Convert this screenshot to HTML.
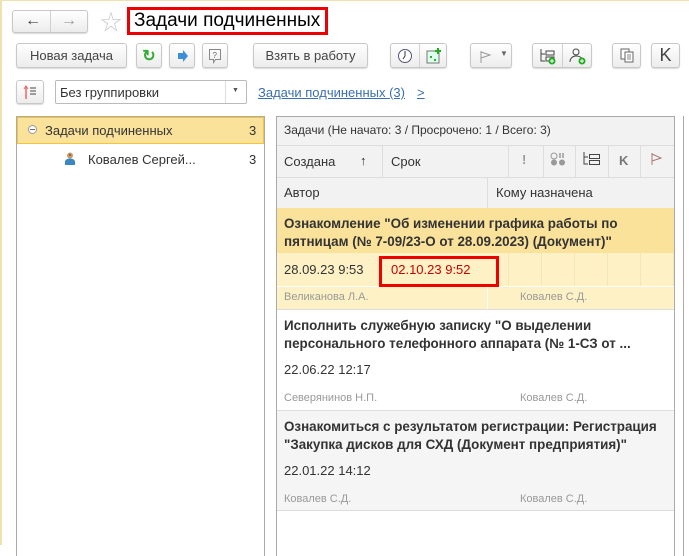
<!DOCTYPE html>
<html><head><meta charset="utf-8"><style>
*{box-sizing:border-box;margin:0;padding:0}
body{width:689px;height:545px;overflow:hidden;background:#fff;font-family:"Liberation Sans","Noto Sans CJK SC",sans-serif;font-size:13px;color:#333;position:relative}
.a{position:absolute}
.btn{position:absolute;border:1px solid #c8c8c8;border-radius:3px;background:linear-gradient(#fff,#ececec);box-shadow:0 1px 1px rgba(0,0,0,.15);display:flex;align-items:center;justify-content:center;color:#444;font-size:13px}
.sep{position:absolute;top:0;bottom:0;width:1px;background:#d0d0d0}
.t{position:absolute;white-space:nowrap}
.b{font-weight:bold;color:#333;font-size:13.4px}
.g{color:#999;font-size:11px}
</style></head><body>
<div class="a" style="left:0;top:0;width:2px;height:545px;background:#efe2b0"></div>
<div class="a" style="left:0;top:0;width:689px;height:1px;background:#efe2b0"></div>

<div class="btn" style="left:12px;top:10px;width:76px;height:23px"><span style="font-size:16px;color:#444;position:absolute;left:12px;top:1px">&#8592;</span><div class="sep" style="left:37px"></div><span style="font-size:16px;color:#999;position:absolute;left:48px;top:1px">&#8594;</span></div>
<div class="t" style="left:100px;top:5px;font-size:22px;color:#ccc">☆</div>
<div class="a" style="left:127px;top:7px;width:201px;height:28px;border:3px solid #e00"></div>
<div class="t" style="left:134px;top:10px;font-size:19px;color:#000">Задачи подчиненных</div>

<div class="btn" style="left:16px;top:43px;width:111px;height:25px">Новая задача</div>
<div class="btn" style="left:136px;top:43px;width:26px;height:25px;color:#3a3;font-size:16px;font-weight:bold">↻</div>
<div class="btn" style="left:169px;top:43px;width:26px;height:25px"><svg width="14" height="14"><path d="M3 4h5V1l5 6-5 6V10H3z" fill="#3a8fd8"/></svg></div>
<div class="btn" style="left:202px;top:43px;width:26px;height:25px"><svg width="14" height="16"><path d="M1.5 1.5h11v10h-5l-2 3v-3h-4z" fill="none" stroke="#888"/><text x="4.5" y="10" font-size="8" fill="#666" font-family="Liberation Sans">?</text></svg></div>
<div class="btn" style="left:253px;top:43px;width:115px;height:25px">Взять в работу</div>
<div class="btn" style="left:390px;top:43px;width:57px;height:25px"><svg style="position:absolute;left:6px;top:4px" width="16" height="16"><circle cx="8" cy="8" r="6.5" fill="#fff" stroke="#557"/><path d="M8 3v5l-2 3" stroke="#335" fill="none"/></svg><div class="sep" style="left:28px"></div><svg style="position:absolute;left:35px;top:4px" width="16" height="16"><rect x="1" y="3" width="12" height="12" fill="#dfe" stroke="#777"/><path d="M4 8h2v2H4zM8 11h2v2H8z" fill="#3a3"/><path d="M12 0v6M9 3h6" stroke="#2a2" stroke-width="2"/></svg></div>
<div class="btn" style="left:470px;top:43px;width:42px;height:25px"><svg style="position:absolute;left:8px;top:6px" width="14" height="14"><path d="M2 1v12M2 2l9 3-9 3" fill="none" stroke="#999"/></svg><span style="position:absolute;left:29px;top:5px;font-size:8px;color:#666">▼</span></div>
<div class="btn" style="left:532px;top:43px;width:60px;height:25px"><svg style="position:absolute;left:6px;top:4px" width="18" height="17"><path d="M2 1v12h4M2 6h4" stroke="#444" fill="none"/><rect x="7" y="3" width="8" height="4" fill="none" stroke="#444"/><rect x="7" y="9" width="8" height="4" fill="none" stroke="#444"/><circle cx="13" cy="13" r="3.5" fill="#2a2"/><path d="M11 13h4M13 11v4" stroke="#fff"/></svg><div class="sep" style="left:29px"></div><svg style="position:absolute;left:36px;top:4px" width="18" height="17"><circle cx="7" cy="4" r="3" fill="none" stroke="#444"/><path d="M1 14c0-4 3-6 6-6s5 1 6 3" fill="none" stroke="#444"/><circle cx="13" cy="13" r="3.5" fill="#2a2"/><path d="M11 13h4M13 11v4" stroke="#fff"/></svg></div>
<div class="btn" style="left:612px;top:43px;width:29px;height:25px"><svg width="14" height="15"><rect x="1" y="1" width="8" height="10" fill="#fff" stroke="#666"/><rect x="5" y="4" width="8" height="10" fill="#fff" stroke="#666"/><path d="M7 7h4M7 9h4M7 11h4" stroke="#888"/></svg></div>
<div class="btn" style="left:651px;top:43px;width:29px;height:25px;font-size:18px;color:#444">K</div>

<div class="btn" style="left:16px;top:80px;width:28px;height:24px"><svg width="16" height="16"><path d="M4 2v13" stroke="#e66" stroke-width="1.5"/><path d="M2 5l2-3 2 3" fill="none" stroke="#e66"/><path d="M8 4h6M8 7h6M8 10h6" stroke="#444"/></svg></div>
<div class="a" style="left:55px;top:80px;width:192px;height:24px;border:1px solid #bbb;border-radius:2px;background:#fff"></div>
<div class="t" style="left:60px;top:85px">Без группировки</div>
<div class="a" style="left:225px;top:81px;width:1px;height:22px;background:#ddd"></div>
<div class="t" style="left:232px;top:87px;font-size:7px;color:#555">▼</div>
<div class="t" style="left:258px;top:85px;color:#3a6fb0;text-decoration:underline">Задачи подчиненных (3)</div>
<div class="t" style="left:417px;top:85px;color:#3a6fb0;text-decoration:underline">&gt;</div>

<div class="a" style="left:16px;top:116px;width:249px;height:440px;border:1px solid #aaa;border-bottom:none"></div>
<div class="a" style="left:17px;top:117px;width:247px;height:27px;background:#fbe29a;border:1px solid #f3c53d"></div>
<div class="a" style="left:28px;top:125px;width:9px;height:9px;border:1px solid #999;border-radius:50%;background:#fff"></div>
<div class="a" style="left:30px;top:129px;width:5px;height:1px;background:#666"></div>
<div class="t" style="left:45px;top:123px">Задачи подчиненных</div>
<div class="t" style="left:249px;top:123px">3</div>
<svg class="a" style="left:64px;top:152px" width="12" height="13"><circle cx="6" cy="3.5" r="3" fill="#c96"/><path d="M1 13v-3c0-2 2-3.5 5-3.5s5 1.5 5 3.5v3z" fill="#3a86c0"/><path d="M5 3h2" stroke="#333"/></svg>
<div class="t" style="left:88px;top:152px">Ковалев Сергей...</div>
<div class="t" style="left:249px;top:152px">3</div>

<div class="a" style="left:276px;top:116px;width:399px;height:440px;border:1px solid #aaa;border-bottom:none"></div>
<div class="a" style="left:683px;top:116px;width:6px;height:440px;border-left:1px solid #aaa"></div>
<div class="a" style="left:277px;top:117px;width:397px;height:60px;background:#f2f2f2"></div>
<div class="t" style="left:284px;top:123px;font-size:12px">Задачи (Не начато: 3 / Просрочено: 1 / Всего: 3)</div>
<div class="a" style="left:277px;top:145px;width:397px;height:1px;background:#ddd"></div>
<div class="a" style="left:277px;top:177px;width:397px;height:31px;background:#f2f2f2;border-top:1px solid #ddd"></div>
<div class="a" style="left:382px;top:146px;width:1px;height:31px;background:#ddd"></div>
<div class="a" style="left:508px;top:146px;width:1px;height:31px;background:#ddd"></div>
<div class="a" style="left:543px;top:146px;width:1px;height:31px;background:#ddd"></div>
<div class="a" style="left:575px;top:146px;width:1px;height:31px;background:#ddd"></div>
<div class="a" style="left:608px;top:146px;width:1px;height:31px;background:#ddd"></div>
<div class="a" style="left:640px;top:146px;width:1px;height:31px;background:#ddd"></div>
<div class="a" style="left:487px;top:177px;width:1px;height:31px;background:#ddd"></div>
<div class="t" style="left:284px;top:154px">Создана</div>
<div class="t" style="left:360px;top:153px">↑</div>
<div class="t" style="left:391px;top:154px">Срок</div>
<div class="t" style="left:522px;top:152px;color:#999;font-weight:bold">!</div>
<svg class="a" style="left:550px;top:152px" width="18" height="14"><circle cx="4" cy="4" r="3" fill="none" stroke="#999"/><path d="M10 1v5M13 1v5" stroke="#999" stroke-width="1.5"/><circle cx="4" cy="10.5" r="3" fill="#999"/><circle cx="12" cy="10.5" r="3" fill="#999"/></svg>
<svg class="a" style="left:583px;top:152px" width="18" height="14"><path d="M1 0v12h4M1 5h4" stroke="#444" fill="none"/><rect x="6.5" y="2.5" width="10" height="4" fill="none" stroke="#444"/><rect x="6.5" y="8.5" width="10" height="4" fill="none" stroke="#444"/></svg>
<div class="t" style="left:619px;top:153px;color:#777;font-weight:bold">K</div>
<svg class="a" style="left:650px;top:152px" width="14" height="14"><path d="M2 1v12M2 2l9 4-9 3" fill="none" stroke="#a77"/></svg>
<div class="t" style="left:284px;top:185px">Автор</div>
<div class="t" style="left:496px;top:185px">Кому назначена</div>

<div class="a" style="left:277px;top:208px;width:397px;height:45px;background:#fbe29a"></div>
<div class="t b" style="left:284px;top:215px;line-height:18px">Ознакомление "Об изменении графика работы по<br>пятницам (№ 7-09/23-О от 28.09.2023) (Документ)"</div>
<div class="a" style="left:277px;top:253px;width:397px;height:56px;background:#fdf1c5"></div>
<div class="a" style="left:508px;top:253px;width:166px;height:33px;background:linear-gradient(90deg,#f5e6b5 1px,transparent 1px) 0 0/33px 33px"></div>
<div class="a" style="left:277px;top:286px;width:397px;height:1px;background:#fff"></div>
<div class="a" style="left:487px;top:286px;width:1px;height:23px;background:#fff"></div>
<div class="t" style="left:284px;top:262px">28.09.23 9:53</div>
<div class="a" style="left:379px;top:256px;width:120px;height:31px;border:3px solid #e00"></div>
<div class="t" style="left:391px;top:262px;color:#c00">02.10.23 9:52</div>
<div class="t g" style="left:284px;top:291px">Великанова Л.А.</div>
<div class="t g" style="left:520px;top:291px">Ковалев С.Д.</div>

<div class="a" style="left:277px;top:309px;width:397px;height:1px;background:#ddd"></div>
<div class="t b" style="left:284px;top:317px;line-height:18px">Исполнить служебную записку "О выделении<br>персонального телефонного аппарата (№ 1-СЗ от ...</div>
<div class="t" style="left:284px;top:362px">22.06.22 12:17</div>
<div class="t g" style="left:284px;top:392px">Северянинов Н.П.</div>
<div class="t g" style="left:520px;top:392px">Ковалев С.Д.</div>

<div class="a" style="left:277px;top:410px;width:397px;height:101px;background:#f5f5f5;border-top:1px solid #ddd;border-bottom:1px solid #ddd"></div>
<div class="t b" style="left:284px;top:418px;line-height:18px">Ознакомиться с результатом регистрации: Регистрация<br>"Закупка дисков для СХД (Документ предприятия)"</div>
<div class="t" style="left:284px;top:463px">22.01.22 14:12</div>
<div class="t g" style="left:284px;top:493px">Ковалев С.Д.</div>
<div class="t g" style="left:520px;top:493px">Ковалев С.Д.</div>
</body></html>
